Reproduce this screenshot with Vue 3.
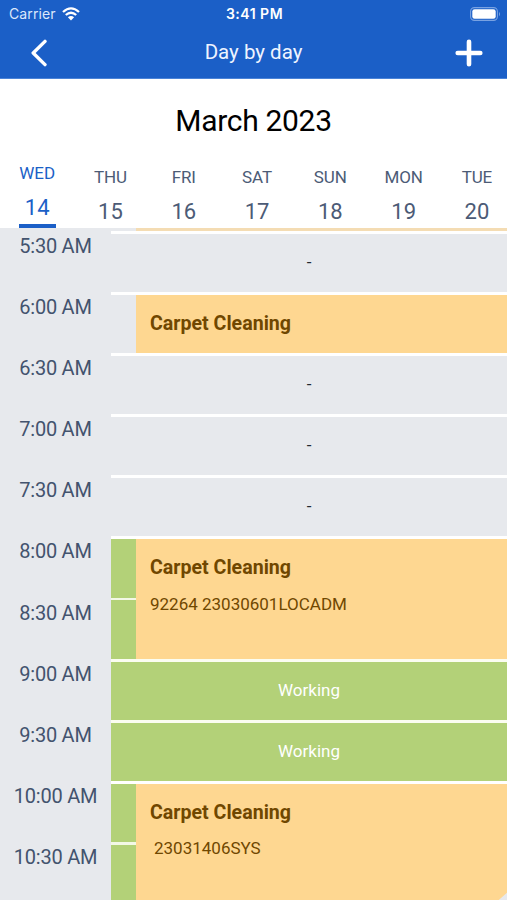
<script setup>
const days = [
  { name: 'WED', date: 14, active: true },
  { name: 'THU', date: 15 },
  { name: 'FRI', date: 16 },
  { name: 'SAT', date: 17 },
  { name: 'SUN', date: 18 },
  { name: 'MON', date: 19 },
  { name: 'TUE', date: 20 },
]

const times = [
  '5:30 AM', '6:00 AM', '6:30 AM', '7:00 AM', '7:30 AM', '8:00 AM',
  '8:30 AM', '9:00 AM', '9:30 AM', '10:00 AM', '10:30 AM',
]

const blocks = [
  { kind: 'empty', span: 1 },
  { kind: 'event', span: 1, title: 'Carpet Cleaning' },
  { kind: 'empty', span: 1 },
  { kind: 'empty', span: 1 },
  { kind: 'empty', span: 1 },
  { kind: 'event', span: 2, working: true, title: 'Carpet Cleaning', detail: '92264 23030601LOCADM' },
  { kind: 'working', span: 1 },
  { kind: 'working', span: 1 },
  { kind: 'event', span: 2, working: true, last: true, title: 'Carpet Cleaning', detail: '23031406SYS' },
]
</script>

<template>
  <div class="screen">
    <header class="top">
      <div class="status">
        <div class="carrier">
          <span>Carrier</span>
          <svg class="wifi" viewBox="0 0 18 14">
            <path d="M1 5Q9-2.2 17 5M3.8 8Q9 3.4 14.2 8" fill="none" stroke="#fff" stroke-width="2.3" />
            <path d="M5.9 10.3Q9 7.7 12.1 10.3L9 13.5Z" fill="#fff" />
          </svg>
        </div>
        <span class="clock">3:41 PM</span>
        <svg class="battery" viewBox="0 0 31 14">
          <rect x=".6" y=".6" width="26.8" height="12.8" rx="3.8" fill="none" stroke="#79a2e2" stroke-width="1.1" />
          <rect x="2.3" y="2.3" width="23.4" height="9.4" rx="2.3" fill="#fff" />
          <path d="M29 4.7Q31 7 29 9.3Z" fill="#79a2e2" />
        </svg>
      </div>
      <nav class="nav">
        <svg class="back" viewBox="0 0 18 28">
          <path d="M15 2.4L3.2 14L15 25.6" fill="none" stroke="#fff" stroke-width="3.4" stroke-linecap="round" stroke-linejoin="round" />
        </svg>
        <h1>Day by day</h1>
        <svg class="add" viewBox="0 0 28 28">
          <path d="M14 2.7V25.3M2.7 14H25.3" fill="none" stroke="#fff" stroke-width="4.6" stroke-linecap="round" />
        </svg>
      </nav>
    </header>

    <h2 class="month">March 2023</h2>
    <div class="week">
      <div v-for="d in days" :key="d.date" class="day" :class="{ active: d.active }">
        <span class="name">{{ d.name }}</span>
        <span class="date">{{ d.date }}</span>
      </div>
    </div>

    <main class="schedule">
      <div class="times">
        <div v-for="t in times" :key="t" class="time">{{ t }}</div>
      </div>
      <div class="slots">
        <div class="previous"></div>
        <section v-for="(b, i) in blocks" :key="i" class="block" :class="[b.kind, { double: b.span === 2 }]">
          <template v-if="b.kind === 'event'">
            <div class="rail" :class="{ green: b.working }">
              <i v-for="n in b.span" :key="n"></i>
            </div>
            <article class="card" :class="{ cut: b.last }">
              <h3>{{ b.title }}</h3>
              <p v-if="b.detail" :class="{ indented: b.last }">{{ b.detail }}</p>
            </article>
          </template>
          <span v-else>{{ b.kind === 'working' ? 'Working' : '-' }}</span>
        </section>
      </div>
    </main>
  </div>
</template>

<style>
body {
  margin: 0;
  overflow: hidden;
}
</style>

<style scoped>
.screen {
  width: 507px;
  height: 900px;
  overflow: hidden;
  display: flex;
  flex-direction: column;
  background: #fff;
  font-family: Roboto, "Liberation Sans", sans-serif;
}
h1, h2, h3, p {
  margin: 0;
  font-weight: 400;
}
svg {
  display: block;
}
.top {
  flex: none;
  height: 79px;
  box-sizing: border-box;
  background: #1b5fc7;
  border-bottom: 1px solid #4a83d8;
  color: #fff;
}
.status {
  height: 27px;
  display: grid;
  grid-template-columns: 1fr auto 1fr;
  align-items: center;
  padding: 0 7px 0 9px;
  font-family: Inter, sans-serif;
}
.carrier {
  display: flex;
  align-items: center;
  gap: 6px;
  font-size: 14px;
  letter-spacing: 0.1px;
  color: #dce8fb;
}
.wifi {
  width: 18px;
  height: 14px;
}
.clock {
  font-size: 14px;
  font-weight: 600;
  letter-spacing: 0.5px;
}
.battery {
  width: 31px;
  height: 14px;
  justify-self: end;
  margin-right: -1px;
}
.nav {
  height: 51px;
  display: grid;
  grid-template-columns: 1fr auto 1fr;
  align-items: center;
  padding: 0 24px 0 24px;
}
.nav h1 {
  font-size: 20.5px;
  line-height: 51px;
  color: #eef4ff;
}
.back {
  width: 18px;
  height: 28px;
  margin-left: 6px;
}
.add {
  width: 28px;
  height: 28px;
  justify-self: end;
}
.month {
  flex: none;
  height: 83px;
  line-height: 83px;
  text-align: center;
  font-size: 30px;
  letter-spacing: -0.3px;
  color: #000;
}
.week {
  flex: none;
  height: 66px;
  display: grid;
  grid-template-columns: repeat(7, 73.3px);
  padding-left: 0.5px;
}
.day {
  display: flex;
  flex-direction: column;
  align-items: center;
  padding-top: 3px;
  color: #4c5b76;
}
.name {
  font-size: 17px;
  line-height: 24px;
  letter-spacing: -0.1px;
}
.date {
  font-size: 22px;
  line-height: 30px;
  margin-top: 8px;
}
.active {
  padding-top: 0;
  color: #1b5fc7;
}
.active .name {
  margin-top: -1px;
}
.active .date {
  width: 37px;
  height: 31px;
  text-align: center;
  border-bottom: 4px solid #1b5fc7;
}
.schedule {
  flex: 1;
  min-height: 0;
  display: grid;
  grid-template-columns: 111px 1fr;
  overflow: hidden;
  background: #e7e9ed;
}
.times {
  padding-top: 3px;
}
.time {
  height: 61.1px;
  text-align: center;
  font-size: 20px;
  letter-spacing: -0.25px;
  line-height: 31px;
  color: #43536e;
}
.previous {
  height: 3px;
  margin-left: 25px;
  background: #f4dcb3;
}
.block {
  height: 61.1px;
  box-sizing: border-box;
  border-top: 3px solid #fff;
  display: flex;
  justify-content: center;
  align-items: center;
  padding-bottom: 2px;
  font-size: 17px;
  color: #222a33;
}
.double {
  height: 122.2px;
}
.working {
  background: #b3d178;
  border-top-color: #fbfdf1;
  color: #fff;
}
.event {
  align-items: stretch;
  justify-content: flex-start;
  padding-bottom: 0;
}
.rail {
  width: 25px;
  display: flex;
  flex-direction: column;
  gap: 2.5px;
}
.rail i {
  flex: 1;
}
.green {
  background: #f3f8e6;
}
.green i {
  background: #b3d178;
}
.card {
  flex: 1;
  padding: 15px 14px 0;
  background: #fed791;
  color: #704700;
}
.card h3 {
  font-size: 19.6px;
  line-height: 28px;
  font-weight: 700;
}
.card p {
  font-size: 17px;
  line-height: 24px;
  margin-top: 9.5px;
}
.card .indented {
  padding-left: 4px;
}
.cut {
  clip-path: polygon(0 0, 100% 0, 100% 109px, 363px 116px, 363px 100%, 0 100%);
}
</style>
